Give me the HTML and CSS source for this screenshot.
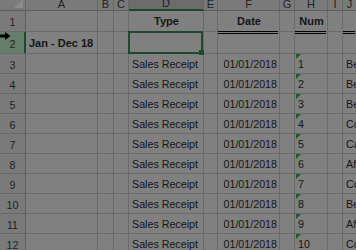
FILE: index.html
```html
<!DOCTYPE html>
<html lang="en">
<head>
    <meta charset="UTF-8">
    <meta name="viewport" content="width=device-width, initial-scale=1.0">
    <title>Sales by Customer</title>
    <link rel="stylesheet" href="styles.css">
</head>
<body>
    <div class="sheet">
        <!-- En-tetes de colonnes -->
        <div class="hd corner"></div>
        <div class="hd">A</div>
        <div class="hd">B</div>
        <div class="hd">C</div>
        <div class="hd sel-col">D</div>
        <div class="hd">E</div>
        <div class="hd">F</div>
        <div class="hd">G</div>
        <div class="hd">H</div>
        <div class="hd">I</div>
        <div class="hd last">J</div>

        <!-- Ligne 1 -->
        <div class="rh">1</div>
        <div class="c"></div>
        <div class="c"></div>
        <div class="c"></div>
        <div class="c title">Type</div>
        <div class="c"></div>
        <div class="c title dbl">Date</div>
        <div class="c"></div>
        <div class="c title dbl">Num</div>
        <div class="c"></div>
        <div class="c last dbl"></div>

        <!-- Ligne 2 -->
        <div class="rh sel-row">2</div>
        <div class="c bold">Jan - Dec 18</div>
        <div class="c"></div>
        <div class="c"></div>
        <div class="c active"></div>
        <div class="c"></div>
        <div class="c"></div>
        <div class="c"></div>
        <div class="c"></div>
        <div class="c"></div>
        <div class="c last"></div>

        <!-- Lignes 3 a 12 -->
        <div class="rh">3</div>
        <div class="c"></div><div class="c"></div><div class="c"></div>
        <div class="c">Sales Receipt</div>
        <div class="c"></div>
        <div class="c date">01/01/2018</div>
        <div class="c"></div>
        <div class="c num">1</div>
        <div class="c"></div>
        <div class="c last">Be</div>

        <div class="rh">4</div>
        <div class="c"></div><div class="c"></div><div class="c"></div>
        <div class="c">Sales Receipt</div>
        <div class="c"></div>
        <div class="c date">01/01/2018</div>
        <div class="c"></div>
        <div class="c num">2</div>
        <div class="c"></div>
        <div class="c last">Be</div>

        <div class="rh">5</div>
        <div class="c"></div><div class="c"></div><div class="c"></div>
        <div class="c">Sales Receipt</div>
        <div class="c"></div>
        <div class="c date">01/01/2018</div>
        <div class="c"></div>
        <div class="c num">3</div>
        <div class="c"></div>
        <div class="c last">Be</div>

        <div class="rh">6</div>
        <div class="c"></div><div class="c"></div><div class="c"></div>
        <div class="c">Sales Receipt</div>
        <div class="c"></div>
        <div class="c date">01/01/2018</div>
        <div class="c"></div>
        <div class="c num">4</div>
        <div class="c"></div>
        <div class="c last">Co</div>

        <div class="rh">7</div>
        <div class="c"></div><div class="c"></div><div class="c"></div>
        <div class="c">Sales Receipt</div>
        <div class="c"></div>
        <div class="c date">01/01/2018</div>
        <div class="c"></div>
        <div class="c num">5</div>
        <div class="c"></div>
        <div class="c last">Ca</div>

        <div class="rh">8</div>
        <div class="c"></div><div class="c"></div><div class="c"></div>
        <div class="c">Sales Receipt</div>
        <div class="c"></div>
        <div class="c date">01/01/2018</div>
        <div class="c"></div>
        <div class="c num">6</div>
        <div class="c"></div>
        <div class="c last">Af</div>

        <div class="rh">9</div>
        <div class="c"></div><div class="c"></div><div class="c"></div>
        <div class="c">Sales Receipt</div>
        <div class="c"></div>
        <div class="c date">01/01/2018</div>
        <div class="c"></div>
        <div class="c num">7</div>
        <div class="c"></div>
        <div class="c last">Co</div>

        <div class="rh">10</div>
        <div class="c"></div><div class="c"></div><div class="c"></div>
        <div class="c">Sales Receipt</div>
        <div class="c"></div>
        <div class="c date">01/01/2018</div>
        <div class="c"></div>
        <div class="c num">8</div>
        <div class="c"></div>
        <div class="c last">Be</div>

        <div class="rh">11</div>
        <div class="c"></div><div class="c"></div><div class="c"></div>
        <div class="c">Sales Receipt</div>
        <div class="c"></div>
        <div class="c date">01/01/2018</div>
        <div class="c"></div>
        <div class="c num">9</div>
        <div class="c"></div>
        <div class="c last">Af</div>

        <div class="rh">12</div>
        <div class="c"></div><div class="c"></div><div class="c"></div>
        <div class="c">Sales Receipt</div>
        <div class="c"></div>
        <div class="c date">01/01/2018</div>
        <div class="c"></div>
        <div class="c num">10</div>
        <div class="c"></div>
        <div class="c last">Co</div>
    </div>

    <!-- curseur de selection de ligne -->
    <svg class="cursor" width="11" height="8" viewBox="0 0 11 8">
        <polygon points="0,2.5 5,2.5 5,0 10.5,4 5,8 5,5.5 0,5.5" fill="#000"/>
    </svg>
</body>
</html>
```

FILE: styles.css
```css
body {
    margin: 0;
    overflow: hidden;
    background-color: #808080;
    font-family: "Liberation Sans", Arial, sans-serif;
    color: #161616;
}

.sheet {
    display: grid;
    grid-template-columns: 26px 72px 16px 15px 75px 14px 62px 15px 33px 15px 1fr;
    grid-template-rows: 11px 21px 22px repeat(10, 20px);
    height: 250px;
    overflow: hidden;
}

/* En-tetes */
.hd,
.rh {
    background-color: #7a7a7a;
    border-right: 1px solid #686868;
    border-bottom: 1px solid #686868;
    box-sizing: border-box;
    display: flex;
    justify-content: center;
    overflow: hidden;
    font-size: 11px;
    color: #222;
}

.hd {
    align-items: flex-end;
    line-height: 11px;
    border-bottom-color: #5e5e5e;
}

.rh {
    align-items: center;
    padding-top: 2px;
    font-size: 10.7px;
    border-right-color: #5e5e5e;
}

.corner {
    position: relative;
}

.corner::after {
    content: "";
    position: absolute;
    right: 2px;
    bottom: 2px;
    border-left: 9px solid transparent;
    border-bottom: 9px solid #8b8b8b;
}

.sel-col {
    background-color: #6c6c6c;
    border-bottom: 2px solid #1d4a2c;
}

.sel-row {
    background-color: #657d6b;
    border-right-color: #1d4a2c;
    box-shadow: inset -1px 0 #1d4a2c;
}

/* Cellules */
.c {
    position: relative;
    border-right: 1px solid #6a6a6a;
    border-bottom: 1px solid #6a6a6a;
    box-sizing: border-box;
    display: flex;
    align-items: flex-end;
    padding: 0 2px 2px 3px;
    line-height: 14px;
    font-size: 10.7px;
    white-space: nowrap;
}

.hd.last,
.c.last {
    border-right: none;
    overflow: hidden;
}

.title {
    justify-content: center;
    font-weight: bold;
    font-size: 11px;
    padding-bottom: 3px;
}

.bold {
    font-weight: bold;
    font-size: 11px;
    padding-bottom: 3px;
}

.date {
    justify-content: flex-end;
}

.dbl::after {
    content: "";
    position: absolute;
    left: 0;
    right: 1px;
    bottom: -3px;
    height: 3px;
    box-sizing: border-box;
    border-top: 1px solid #000;
    border-bottom: 1px solid #000;
    z-index: 1;
}

.c.last.dbl {
    overflow: visible;
}

.num::before {
    content: "";
    position: absolute;
    left: 1px;
    top: 0;
    border-top: 5px solid #1c5a26;
    border-right: 5px solid transparent;
}

.active::after {
    content: "";
    position: absolute;
    left: -1px;
    top: -1px;
    right: 0;
    bottom: -1px;
    border: 2px solid #1d4a2c;
    z-index: 2;
}

.active::before {
    content: "";
    position: absolute;
    right: -1px;
    bottom: -2px;
    width: 5px;
    height: 5px;
    background-color: #1d4a2c;
    z-index: 3;
}

.cursor {
    position: absolute;
    left: 0;
    top: 32px;
}
```
